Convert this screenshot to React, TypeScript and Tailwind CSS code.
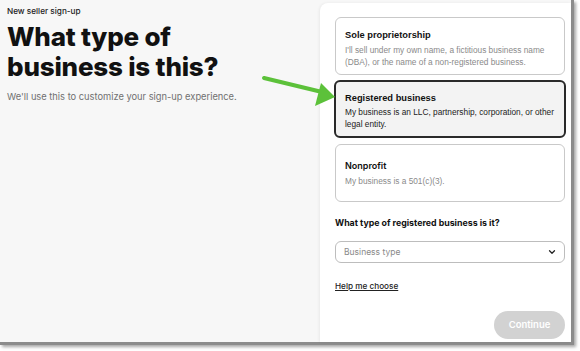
import React from "react";

export default function App() {
  return (
    <div className="w-[580px] h-[351px] bg-white relative overflow-hidden" style={{ fontFamily: "Inter, 'Liberation Sans', sans-serif" }}>
      <div className="w-[574px] h-[345px] bg-[#f7f7f7] border-r-[3px] border-b-[3px] border-[#8c8c8c] shadow-[2px_2px_3px_rgba(0,0,0,0.35)] flex">
        {/* left */}
        <div className="w-[320px] pl-[7px] pt-[6px] flex flex-col">
          <div className="text-[8.2px] font-medium text-[#222] leading-[11px]">New seller sign-up</div>
          <h1 className="mt-[5px] text-[26px] font-extrabold leading-[30px] text-[#111] tracking-[-0.2px]">What type of<br />business is this?</h1>
          <p className="mt-[9px] text-[9.3px] text-[#707070] leading-[12px]">We'll use this to customize your sign-up experience.</p>
        </div>
        {/* right panel */}
        <div className="flex-1 mt-[3px] bg-white rounded-tl-[8px] shadow-[-1px_0_3px_rgba(0,0,0,0.06)] pl-[15px] pr-[6px] pt-[14px] flex flex-col">
          <div className="h-[58px] border border-[#c9c9c9] rounded-[6px] px-[9px] pt-[11px]" style={{ fontFamily: "'Liberation Sans', Arial, sans-serif" }}>
            <div className="text-[9.3px] font-bold text-[#111] leading-[12px]">Sole proprietorship</div>
            <div className="mt-[4px] text-[8.3px] text-[#8a8a8a] leading-[11.5px]">I'll sell under my own name, a fictitious business name (DBA), or the name of a non-registered business.</div>
          </div>
          <div className="mt-[5px] -mx-px h-[58px] border-2 border-[#2a2a2a] bg-[#f3f3f3] rounded-[6px] px-[9px] pt-[10px]" style={{ fontFamily: "'Liberation Sans', Arial, sans-serif" }}>
            <div className="text-[9.3px] font-bold text-[#111] leading-[12px]">Registered business</div>
            <div className="mt-[3px] text-[8.3px] text-[#222] leading-[11.5px]">My business is an LLC, partnership, corporation, or other legal entity.</div>
          </div>
          <div className="mt-[6px] h-[58px] border border-[#c9c9c9] rounded-[6px] px-[9px] pt-[15px]">
            <div className="text-[9px] font-semibold text-[#111] leading-[12px]">Nonprofit</div>
            <div className="mt-[4px] text-[8.3px] text-[#8a8a8a] leading-[11.5px]" style={{ fontFamily: "'Liberation Sans', Arial, sans-serif" }}>My business is a 501(c)(3).</div>
          </div>
          <div className="mt-[14px] text-[8.8px] font-bold text-[#111] leading-[13px]">What type of registered business is it?</div>
          <div className="mt-[12px] h-[22px] border border-[#bdbdbd] rounded-[6px] flex items-center justify-between pl-[8px] pr-[7px]">
            <span className="text-[8.5px] text-[#8a8a8a]">Business type</span>
            <svg width="10" height="10" viewBox="0 0 24 24" fill="none" stroke="#222" strokeWidth="3" strokeLinecap="round" strokeLinejoin="round"><path d="M6 9l6 6 6-6" /></svg>
          </div>
          <div className="mt-[17px] text-[8.2px] font-medium text-[#222] underline leading-[12px]">Help me choose</div>
          <div className="flex-1 flex items-end justify-end pb-[3px]">
            <div className="w-[71px] h-[28px] rounded-full bg-[#d2d2d2] text-white text-[9.5px] font-semibold flex items-center justify-center">Continue</div>
          </div>
        </div>
      </div>
      {/* arrow */}
      <svg className="absolute left-0 top-0 pointer-events-none" width="580" height="351">
        <line x1="264" y1="78" x2="322" y2="92" stroke="#5cc13a" strokeWidth="4" strokeLinecap="round" />
        <polygon points="335,97 315,106 321,83" fill="#5cc13a" />
      </svg>
    </div>
  );
}
